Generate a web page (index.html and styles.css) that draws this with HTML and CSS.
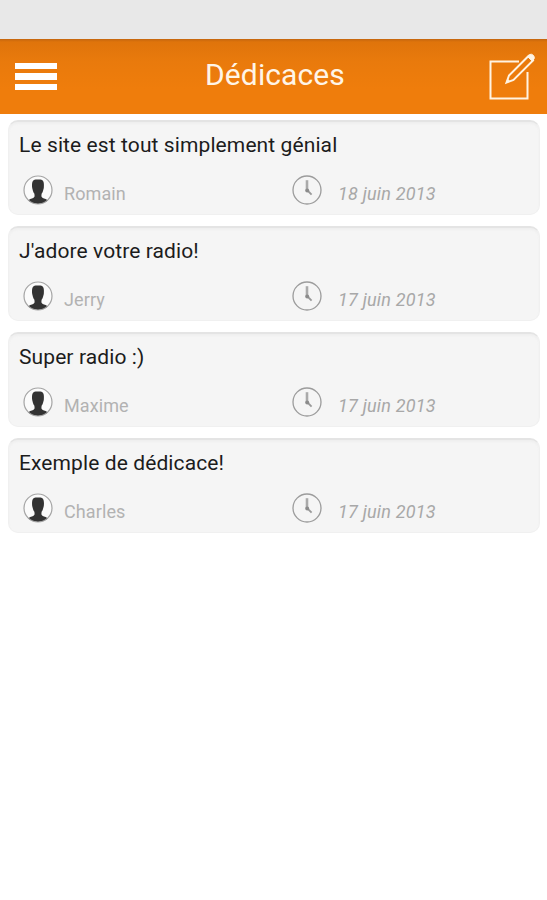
FILE: index.html
```
<!DOCTYPE html>
<html lang="fr">
<head>
  <meta charset="UTF-8">
  <title>Dédicaces</title>
  <link rel="stylesheet" href="styles.css">
</head>
<body>
  <!-- Icônes partagées -->
  <svg class="sprite">
    <symbol id="user" viewBox="0 0 30 30">
      <circle cx="15" cy="15" r="14" fill="#fbfbfb"/>
      <path d="M5 25.6C7 23.4 11.6 23.6 11.6 21L11.4 18.8C10 17.2 9.8 14.8 9.2 13C8.6 7 9.6 4.8 12.5 4.4H17.5C20.4 4.8 21.4 7 20.8 13C20.2 14.8 20 17.2 18.6 18.8L18.4 21C18.4 23.6 23 23.4 25 25.6C19.5 30 10.5 30 5 25.6Z" fill="#333"/>
      <circle cx="15" cy="15" r="14" fill="none" stroke="#a4a4a4" stroke-width="1.2"/>
    </symbol>
    <symbol id="clock" viewBox="0 0 30 30">
      <circle cx="15" cy="15" r="14" fill="none" stroke="#9c9c9c" stroke-width="1.3"/>
      <path d="M15 5.2V15" fill="none" stroke="#aaa" stroke-width="2.6"/>
      <path d="M15 15L19.6 19.6" fill="none" stroke="#999" stroke-width="1.8"/>
      <circle cx="15.2" cy="15.6" r="2" fill="#8c8c8c"/>
    </symbol>
  </svg>

  <div class="statusbar"></div>

  <header class="header">
    <div class="menu">
      <span></span>
      <span></span>
      <span></span>
    </div>
    <h1>Dédicaces</h1>
    <svg class="edit" viewBox="0 0 48 48" fill="none" stroke="#fff3e2" stroke-width="2">
      <path d="M31 8.5H2.5V45.5H39.5V19"/>
      <path d="M18.5 29.5L21 22.5L40.5 3L45 7.5L25.5 27Z"/>
      <path d="M39.5 3.5L41.5 1.5Q43.5 .5 45.5 2.5Q47 4.5 46 6L44.2 8Z" fill="#fff3e2" stroke-width="1"/>
      <path d="M18 30L19.5 25.5L22.5 28.5Z" fill="#fff3e2" stroke="none"/>
    </svg>
  </header>

  <main class="list">
    <div class="card">
      <h3>Le site est tout simplement génial</h3>
      <div class="infos">
        <svg class="icon"><use href="#user"/></svg>
        <p class="name">Romain</p>
        <svg class="icon"><use href="#clock"/></svg>
        <p class="date">18 juin 2013</p>
      </div>
    </div>

    <div class="card">
      <h3>J'adore votre radio!</h3>
      <div class="infos">
        <svg class="icon"><use href="#user"/></svg>
        <p class="name">Jerry</p>
        <svg class="icon"><use href="#clock"/></svg>
        <p class="date">17 juin 2013</p>
      </div>
    </div>

    <div class="card">
      <h3>Super radio :)</h3>
      <div class="infos">
        <svg class="icon"><use href="#user"/></svg>
        <p class="name">Maxime</p>
        <svg class="icon"><use href="#clock"/></svg>
        <p class="date">17 juin 2013</p>
      </div>
    </div>

    <div class="card">
      <h3>Exemple de dédicace!</h3>
      <div class="infos">
        <svg class="icon"><use href="#user"/></svg>
        <p class="name">Charles</p>
        <svg class="icon"><use href="#clock"/></svg>
        <p class="date">17 juin 2013</p>
      </div>
    </div>
  </main>
</body>
</html>
```

FILE: styles.css
```
* {
  margin: 0;
  padding: 0;
  box-sizing: border-box;
  font-family: Roboto, sans-serif;
}

body {
  min-height: 100vh;
  background-color: #fff;
}

.sprite {
  display: none;
}

.statusbar {
  height: 39px;
  background-color: #e8e8e8;
}

.header {
  height: 75px;
  padding: 0 11px 0 15px;
  display: grid;
  grid-template-columns: 47px 1fr 48px;
  align-items: center;
  background: linear-gradient(#c4660f, #df740b 3px, #e97a0c 22px, #ef7d0c 50px);
}

.menu {
  width: 42px;
  display: flex;
  flex-direction: column;
  gap: 4px;
}

.menu span {
  height: 6.5px;
  background-color: #fff;
}

.header h1 {
  font-size: 30px;
  font-weight: 400;
  line-height: 36px;
  padding-bottom: 4px;
  text-align: center;
  letter-spacing: 0.1px;
  color: #fff5e8;
}

.edit {
  width: 48px;
  height: 48px;
}

.list {
  padding: 6px 7px 0 8px;
  display: flex;
  flex-direction: column;
  gap: 11px;
}

.card {
  height: 95px;
  padding: 10px 10px 0 10px;
  background-color: #f5f5f5;
  border: 1px solid #f0f0f0;
  border-top: 2px solid #e4e4e4;
  border-radius: 10px;
  box-shadow: inset 0 2px 2px #efefef;
}

.card h3 {
  font-size: 21px;
  font-weight: 400;
  line-height: 26px;
  letter-spacing: 0.1px;
  color: #1c1c1c;
}

.infos {
  margin-top: 17px;
  padding-left: 4px;
  display: grid;
  grid-template-columns: 41px 228px 46px 1fr;
  align-items: center;
}

.icon {
  width: 30px;
  height: 30px;
}

.infos p {
  font-size: 18px;
  line-height: 22px;
  padding-top: 7px;
  letter-spacing: 0.1px;
  color: #b2b2b2;
}

.infos .date {
  font-style: italic;
  letter-spacing: 0.2px;
  color: #a8a8a8;
}
```
